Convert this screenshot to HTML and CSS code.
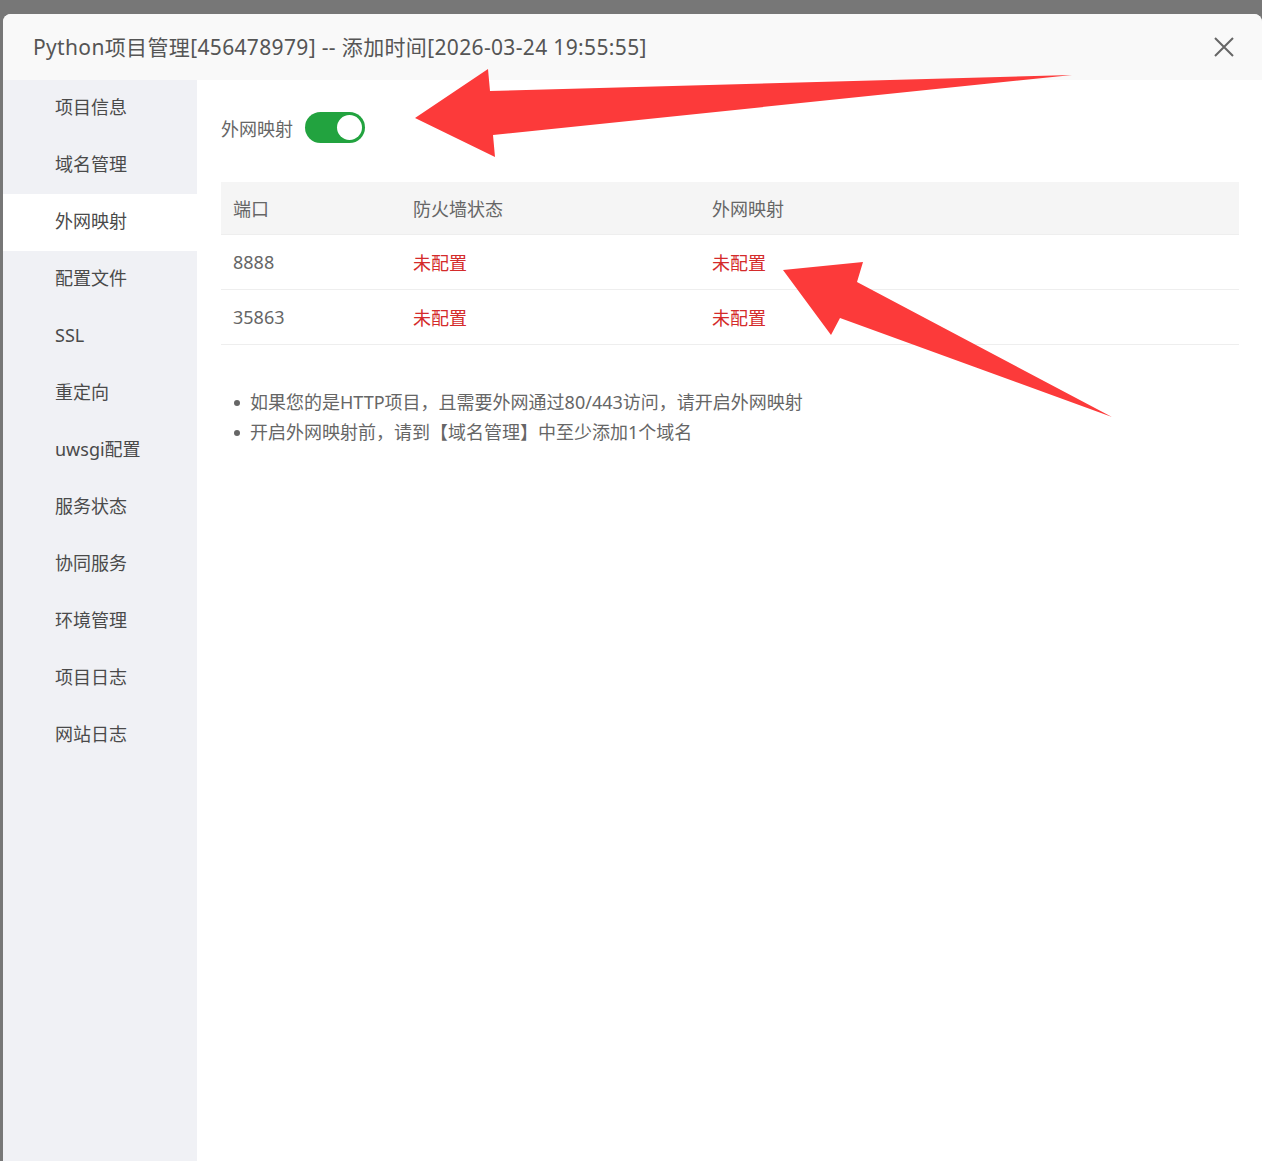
FILE: index.html
```html
<!DOCTYPE html>
<html lang="zh-CN">
<head>
    <meta charset="UTF-8">
    <meta name="viewport" content="width=device-width, initial-scale=1.0">
    <title>Python项目管理</title>
    <link rel="stylesheet" href="styles.css">
</head>
<body>

<div class="modal">
    <div class="modal-header">
        <span class="modal-title">Python项目管理[456478979] -- 添加时间[2026-03-24 19:55:55]</span>
        <span class="close-btn">
            <svg width="20" height="20" viewBox="0 0 20 20"><path d="M1 1 L19 19 M19 1 L1 19" stroke="#666" stroke-width="2" fill="none"/></svg>
        </span>
    </div>
    <div class="modal-body">
        <ul class="side-menu">
            <li>项目信息</li>
            <li>域名管理</li>
            <li class="active">外网映射</li>
            <li>配置文件</li>
            <li>SSL</li>
            <li>重定向</li>
            <li>uwsgi配置</li>
            <li>服务状态</li>
            <li>协同服务</li>
            <li>环境管理</li>
            <li>项目日志</li>
            <li>网站日志</li>
        </ul>
        <div class="content">
            <div class="switch-row">
                <span class="switch-label">外网映射</span>
                <span class="switch on"><span class="knob"></span></span>
            </div>
            <table class="port-table">
                <thead>
                    <tr><th class="col-port">端口</th><th class="col-fw">防火墙状态</th><th>外网映射</th></tr>
                </thead>
                <tbody>
                    <tr><td>8888</td><td class="warn">未配置</td><td class="warn">未配置</td></tr>
                    <tr><td>35863</td><td class="warn">未配置</td><td class="warn">未配置</td></tr>
                </tbody>
            </table>
            <ul class="tips">
                <li>如果您的是HTTP项目，且需要外网通过80/443访问，请开启外网映射</li>
                <li>开启外网映射前，请到【域名管理】中至少添加1个域名</li>
            </ul>
        </div>
    </div>
</div>

<svg class="marks" width="1262" height="1161" viewBox="0 0 1262 1161">
    <polygon points="415,118 488,69 490,91 1072,75 493,135 495,157" fill="#fc3a3a"/>
    <polygon points="783,270 863,262 857,282 1112,417 840,318 831,335" fill="#fc3a3a"/>
</svg>

</body>
</html>
```

FILE: styles.css
```css
body {
    margin: 0;
    padding: 0;
    height: 1161px;
    overflow: hidden;
    background-color: #777777;
    font-family: "Noto Sans", "Noto Sans CJK SC", sans-serif;
    position: relative;
}
.modal {
    margin: 14px 0 0 3px;
    height: 1147px;
    background-color: #ffffff;
    border-radius: 8px 8px 0 0;
    overflow: hidden;
    display: flex;
    flex-direction: column;
}
.modal-header {
    height: 66px;
    flex-shrink: 0;
    display: flex;
    align-items: center;
    justify-content: space-between;
    padding: 0 28px 0 30px;
    background-color: #f9f9f9;
}
.modal-title {
    font-size: 21px;
    letter-spacing: 0.35px;
    color: #555;
    margin-top: -2px;
}
.close-btn {
    display: flex;
}
.modal-body {
    flex: 1;
    display: flex;
}
.side-menu {
    width: 194px;
    margin: 0;
    padding: 0;
    list-style: none;
    background-color: #f0f1f5;
}
.side-menu li {
    height: 57px;
    line-height: 55px;
    padding-left: 52px;
    font-size: 18px;
    color: #4a4a4a;
}
.side-menu li.active {
    background-color: #ffffff;
}
.content {
    flex: 1;
    padding: 32px 23px 0 24px;
}
.switch-row {
    display: flex;
    align-items: center;
    height: 31px;
}
.switch-label {
    font-size: 18px;
    color: #666;
    margin-right: 12px;
}
.switch {
    width: 60px;
    height: 31px;
    border-radius: 16px;
    background-color: #ccc;
    position: relative;
}
.switch.on {
    background-color: #22a33f;
}
.knob {
    position: absolute;
    top: 3px;
    right: 3px;
    width: 25px;
    height: 25px;
    border-radius: 50%;
    background-color: #ffffff;
}
.port-table {
    width: 100%;
    margin-top: 39px;
    border-collapse: collapse;
    font-size: 18px;
    color: #666;
}
.port-table th {
    height: 52px;
    text-align: left;
    font-weight: normal;
    padding: 0 12px;
    background-color: #f5f5f5;
    border-bottom: 1px solid #eeeeee;
}
.port-table td {
    height: 54px;
    padding: 0 12px;
    border-bottom: 1px solid #eeeeee;
}
.col-port {
    width: 156px;
}
.col-fw {
    width: 275px;
}
.warn {
    color: #d42b2b;
}
.tips {
    margin: 42px 0 0 0;
    padding: 0;
    list-style: none;
    font-size: 18px;
    color: #666;
}
.tips li {
    line-height: 30px;
    padding-left: 29px;
    position: relative;
}
.tips li::before {
    content: "";
    position: absolute;
    left: 13px;
    top: 13px;
    width: 6px;
    height: 6px;
    border-radius: 50%;
    background-color: #666;
}
.marks {
    position: absolute;
    top: 0;
    left: 0;
    pointer-events: none;
}
```
